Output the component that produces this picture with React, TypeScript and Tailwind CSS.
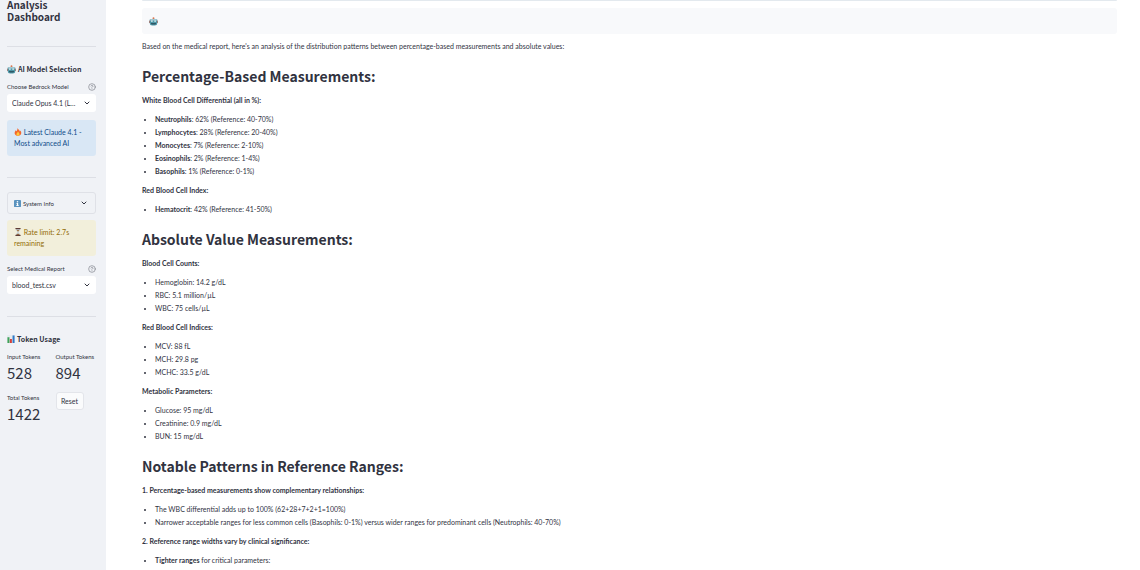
import { useState } from 'react';
import type { ReactNode } from 'react';
import { ChevronDown, CircleHelp } from 'lucide-react';

type Item = { label?: string; text: string };
type Group = { title: string; items: Item[] };
type Section = { heading: string; groups: Group[] };

const SECTIONS: Section[] = [
  {
    heading: 'Percentage-Based Measurements:',
    groups: [
      {
        title: 'White Blood Cell Differential (all in %):',
        items: [
          { label: 'Neutrophils', text: ': 62% (Reference: 40-70%)' },
          { label: 'Lymphocytes', text: ': 28% (Reference: 20-40%)' },
          { label: 'Monocytes', text: ': 7% (Reference: 2-10%)' },
          { label: 'Eosinophils', text: ': 2% (Reference: 1-4%)' },
          { label: 'Basophils', text: ': 1% (Reference: 0-1%)' },
        ],
      },
      {
        title: 'Red Blood Cell Index:',
        items: [{ label: 'Hematocrit', text: ': 42% (Reference: 41-50%)' }],
      },
    ],
  },
  {
    heading: 'Absolute Value Measurements:',
    groups: [
      {
        title: 'Blood Cell Counts:',
        items: [{ text: 'Hemoglobin: 14.2 g/dL' }, { text: 'RBC: 5.1 million/µL' }, { text: 'WBC: 75 cells/µL' }],
      },
      {
        title: 'Red Blood Cell Indices:',
        items: [{ text: 'MCV: 88 fL' }, { text: 'MCH: 29.8 pg' }, { text: 'MCHC: 33.5 g/dL' }],
      },
      {
        title: 'Metabolic Parameters:',
        items: [{ text: 'Glucose: 95 mg/dL' }, { text: 'Creatinine: 0.9 mg/dL' }, { text: 'BUN: 15 mg/dL' }],
      },
    ],
  },
  {
    heading: 'Notable Patterns in Reference Ranges:',
    groups: [
      {
        title: '1. Percentage-based measurements show complementary relationships:',
        items: [
          { text: 'The WBC differential adds up to 100% (62+28+7+2+1=100%)' },
          {
            text: 'Narrower acceptable ranges for less common cells (Basophils: 0-1%) versus wider ranges for predominant cells (Neutrophils: 40-70%)',
          },
        ],
      },
      {
        title: '2. Reference range widths vary by clinical significance:',
        items: [{ label: 'Tighter ranges', text: ' for critical parameters:' }],
      },
    ],
  },
];

function RobotIcon() {
  return (
    <svg viewBox="0 0 18 18" className="size-[9px] shrink-0" aria-hidden="true">
      <path d="M7.500 2h3v3h-3z" fill="#a9927f" />
      <circle cx="9" cy="2.200" r="1.800" fill="#dd7248" />
      <rect x="0" y="7" width="3" height="5" rx="1" fill="#b9786c" />
      <rect x="15" y="7" width="3" height="5" rx="1" fill="#b9786c" />
      <path d="M3.500 4h11a2 2 0 0 1 2 2v6a5 5 0 0 1-5 5h-5a5 5 0 0 1-5-5V6a2 2 0 0 1 2-2z" fill="#4f98a8" />
      <path d="M3.500 4h11a2 2 0 0 1 2 2v1h-15V6a2 2 0 0 1 2-2z" fill="#a3c6d0" />
      <circle cx="5.800" cy="8.200" r="1.700" fill="#dff0f3" />
      <circle cx="12.200" cy="8.200" r="1.700" fill="#dff0f3" />
      <path d="M4 12h10v.5a2.500 2.500 0 0 1-2.500 2.500h-5A2.500 2.500 0 0 1 4 12.500z" fill="#2f5866" />
    </svg>
  );
}

function FireIcon() {
  return (
    <svg viewBox="0 0 18 18" className="inline-block size-2 align-[-1px]" aria-hidden="true">
      <path
        d="M8 0c1 3 5 5 5 8 .8-.6 1-1.600 1-2.500C16 8 17 10 16 13c-1 3-4 5-7 5s-7-2-7.500-5.500C1 9 3 8 3.500 5c1 .7 1.500 1.500 1.500 2.500C7 6 8 3 8 0z"
        fill="#f4672a"
      />
      <path
        d="M9 8c.5 2 3.500 3 3.500 6 0 2-1.500 3.500-3.500 3.500S5.500 16 5.500 14C5.500 11.500 8.500 10.500 9 8z"
        fill="#fdc93c"
      />
    </svg>
  );
}

function InfoIcon() {
  return (
    <svg viewBox="0 0 16 16" className="size-[7px]" aria-hidden="true">
      <rect width="16" height="16" rx="2" fill="#5b93bf" />
      <rect x="6.500" y="2.500" width="3" height="3" fill="#fff" />
      <path d="M5.500 7h4v5h1.500v1.500h-6V12h1.700V8.500H5.500z" fill="#fff" />
    </svg>
  );
}

function HourglassIcon() {
  return (
    <svg viewBox="0 0 18 18" className="inline-block size-2 align-[-1px]" aria-hidden="true">
      <path d="M4.500 2h9c0 4-3 5-3 7s3 3 3 7h-9c0-4 3-5 3-7s-3-3-3-7z" fill="#c9d3d6" />
      <path d="M6 4.500h6L9.500 8h-1zM5.500 16c.5-2.500 2-3 3.500-3s3 .5 3.500 3z" fill="#a8763f" />
      <rect x="3" y="0" width="12" height="2.600" rx="1" fill="#5d3b35" />
      <rect x="3" y="15.400" width="12" height="2.600" rx="1" fill="#5d3b35" />
    </svg>
  );
}

function ChartIcon() {
  return (
    <svg viewBox="0 0 18 18" className="size-2" aria-hidden="true">
      <rect width="18" height="18" rx="1" fill="#e6ebef" />
      <rect x="1" y="5" width="4.500" height="13" fill="#3fa35a" />
      <rect x="6.500" y="9" width="4.500" height="9" fill="#d5423b" />
      <rect x="12.500" y="1" width="4.500" height="17" fill="#2f78c8" />
    </svg>
  );
}

function Picker({ id, label, options }: { id: string; label: string; options: string[] }) {
  return (
    <div className="flex flex-col gap-px">
      <div className="flex items-center justify-between">
        <label htmlFor={id} className="text-[6px] leading-3">
          {label}
        </label>
        <CircleHelp className="size-2 text-[#7d808a]" />
      </div>
      <div className="relative">
        <select
          id={id}
          className="block h-[18px] w-full appearance-none rounded-[3px] bg-white pr-3 pl-[5px] text-[7px] leading-[18px]"
        >
          {options.map((option) => (
            <option key={option}>{option}</option>
          ))}
        </select>
        <ChevronDown className="pointer-events-none absolute top-[5px] right-[5px] size-2" strokeWidth={3} />
      </div>
    </div>
  );
}

function Metric({ label, value }: { label: string; value: number }) {
  return (
    <div>
      <div className="text-[6px] leading-3 whitespace-nowrap">{label}</div>
      <div className="font-['Noto_Sans_CJK_SC','Liberation_Sans',sans-serif] text-[15px] leading-[19px]">{value}</div>
    </div>
  );
}

function SideHeading({ icon, children }: { icon: ReactNode; children: ReactNode }) {
  return (
    <h3 className="flex items-center gap-0.5 font-['Noto_Sans_CJK_SC','Liberation_Sans',sans-serif] text-[7px] leading-3 font-semibold whitespace-nowrap">
      {icon}
      {children}
    </h3>
  );
}

function Sidebar() {
  const [infoOpen, setInfoOpen] = useState(false);
  const [tokens, setTokens] = useState({ input: 528, output: 894 });

  return (
    <aside className="w-[106px] shrink-0 bg-[#f0f2f6] pr-[10px] pl-[7px]">
      <h1 className="-mt-px font-['Noto_Sans_CJK_SC','Liberation_Sans',sans-serif] text-[10px] leading-3 font-semibold">
        Analysis Dashboard
      </h1>
      <hr className="mt-[23px] border-[#dddfe5]" />

      <div className="mt-4 flex flex-col gap-[6px]">
        <SideHeading icon={<RobotIcon />}>AI Model Selection</SideHeading>
        <Picker id="model" label="Choose Bedrock Model" options={['Claude Opus 4.1 (L...']} />
      </div>
      <div className="mt-2 rounded-[3px] bg-[#d9e7f5] px-[7px] py-[7px] text-[7px] leading-[11px] text-[#0f4c8a]">
        <FireIcon /> Latest Claude 4.1 - Most advanced AI
      </div>

      <hr className="mt-[21px] border-[#dddfe5]" />

      <button
        type="button"
        aria-expanded={infoOpen}
        onClick={() => setInfoOpen(!infoOpen)}
        className="mt-[14px] flex h-[22px] w-full items-center gap-0.5 rounded-[3px] border border-[#dfe1e7] px-[6px] text-[6px]"
      >
        <InfoIcon />
        System Info
        <ChevronDown className="mr-px ml-auto size-2" strokeWidth={3} />
      </button>
      <div className="mt-[6px] mb-[7px] rounded-[3px] bg-[#f2efdb] px-[7px] py-[7px] text-[7px] leading-[11px] text-[#926c05]">
        <HourglassIcon /> Rate limit: 2.7s remaining
      </div>
      <Picker id="report" label="Select Medical Report" options={['blood_test.csv']} />

      <hr className="mt-[22px] border-[#dddfe5]" />

      <div className="mt-4">
        <SideHeading icon={<ChartIcon />}>Token Usage</SideHeading>
      </div>
      <div className="mt-[6px] grid grid-cols-2 gap-x-2 gap-y-[10px]">
        <Metric label="Input Tokens" value={tokens.input} />
        <Metric label="Output Tokens" value={tokens.output} />
        <Metric label="Total Tokens" value={tokens.input + tokens.output} />
        <button
          type="button"
          onClick={() => setTokens({ input: 0, output: 0 })}
          className="h-[18px] w-7 rounded-[3px] border border-[#e3e5ea] bg-[#fafbfc] text-[7px]"
        >
          Reset
        </button>
      </div>
    </aside>
  );
}

export default function App() {
  return (
    <div className="flex h-screen overflow-hidden bg-white font-[Lato,'Liberation_Sans',sans-serif] text-[#31333f]">
      <Sidebar />

      <main className="min-w-0 flex-1 pr-[23px] pl-9">
        <div className="h-px rounded-b-[3px] bg-[#e3e9ee]" />
        <div className="mt-[7px] flex h-[26px] items-center rounded-[3px] bg-[#f8f9fb] px-[7px]">
          <RobotIcon />
        </div>

        <div className="mt-[6px] flex flex-col gap-[6px] text-[7px] leading-[13px]">
          <p>
            Based on the medical report, here's an analysis of the distribution patterns between percentage-based
            measurements and absolute values:
          </p>
          {SECTIONS.map((section) => (
            <section key={section.heading} className="mt-2 flex flex-col gap-[6px]">
              <h2 className="mb-0.5 font-['Noto_Sans_CJK_SC','Liberation_Sans',sans-serif] text-[14px] leading-[19px] font-semibold">
                {section.heading}
              </h2>
              {section.groups.map((group) => (
                <div key={group.title} className="flex flex-col gap-[6px]">
                  <p className="font-bold">{group.title}</p>
                  <ul className="list-disc pl-[13px]">
                    {group.items.map((item) => (
                      <li key={item.text}>
                        {item.label && <strong>{item.label}</strong>}
                        {item.text}
                      </li>
                    ))}
                  </ul>
                </div>
              ))}
            </section>
          ))}
        </div>
      </main>
    </div>
  );
}
